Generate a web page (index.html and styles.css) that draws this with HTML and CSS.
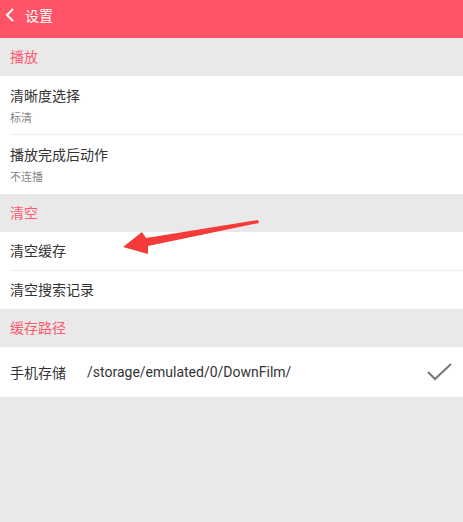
FILE: index.html
```html
<!DOCTYPE html>
<html lang="zh-CN">
<head>
    <meta charset="UTF-8">
    <meta name="viewport" content="width=device-width, initial-scale=1.0">
    <title>设置</title>
    <link rel="stylesheet" href="styles.css">
</head>
<body>
    <!-- Title bar -->
    <div class="topbar">
        <svg class="back" width="10" height="14" viewBox="0 0 10 14">
            <path d="M8 1 L2 7 L8 13" fill="none" stroke="#fff" stroke-width="2"/>
        </svg>
        <span class="title">设置</span>
    </div>

    <div class="section">播放</div>
    <div class="group">
        <div class="item two-line">
            <div class="item-title">清晰度选择</div>
            <div class="item-sub">标清</div>
        </div>
        <div class="item two-line">
            <div class="item-title">播放完成后动作</div>
            <div class="item-sub">不连播</div>
        </div>
    </div>

    <div class="section">清空</div>
    <div class="group">
        <div class="item one-line">清空缓存</div>
        <div class="item one-line">清空搜索记录</div>
    </div>

    <div class="section">缓存路径</div>
    <div class="group">
        <div class="item path-row">
            <span class="path-name">手机存储</span>
            <span class="path-value">/storage/emulated/0/DownFilm/</span>
            <svg class="check" width="26" height="18" viewBox="0 0 26 18">
                <path d="M1 9 L8 16 L24 1" fill="none" stroke="#777" stroke-width="2"/>
            </svg>
        </div>
    </div>

    <!-- annotation arrow over the list -->
    <svg class="arrow" width="463" height="522" viewBox="0 0 463 522">
        <polygon points="258,220 146,238 142,232 123,247 148,254 148,246 259,223" fill="#f53a3a"/>
    </svg>
</body>
</html>
```

FILE: styles.css
```css
body {
    margin: 0;
    background-color: #e9e9e9;
    font-family: Roboto, "Noto Sans CJK SC", sans-serif;
    position: relative;
    height: 522px;
    overflow: hidden;
}
.topbar {
    height: 38px;
    box-sizing: border-box;
    padding-bottom: 8px;
    background-color: #ff5468;
    display: flex;
    align-items: center;
    padding-left: 5px;
    color: #fff;
}
.back {
    margin-right: 10px;
}
.title {
    font-size: 14px;
}
.section {
    height: 38px;
    line-height: 38px;
    padding-left: 10px;
    font-size: 14px;
    color: #ff5a70;
}
.group {
    background-color: #fff;
}
.item {
    margin-left: 10px;
    border-bottom: 1px solid #ececec;
    color: #333;
    font-size: 14px;
}
.item:last-child {
    border-bottom: none;
}
.two-line {
    height: 58px;
    padding-top: 10px;
    box-sizing: border-box;
}
.two-line:first-child {
    height: 59px;
}
.two-line:last-child {
    height: 59px;
}
.item-title {
    line-height: 20px;
}
.item-sub {
    font-size: 11px;
    color: #888;
    margin-top: 5px;
    line-height: 16px;
}
.one-line {
    height: 38px;
    line-height: 38px;
}
.path-row {
    height: 50px;
    display: flex;
    align-items: center;
}
.path-name {
    width: 77px;
}
.path-value {
    flex: 1;
    color: #333;
}
.check {
    margin-right: 10px;
}
.arrow {
    position: absolute;
    left: 0;
    top: 0;
    pointer-events: none;
}
```
